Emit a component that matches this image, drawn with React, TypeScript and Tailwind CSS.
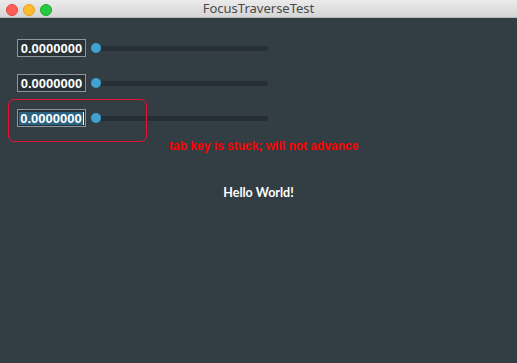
import React from 'react';

const TrafficLights: React.FC = () => (
  <div className="absolute left-[6px] top-[4px] flex gap-[5px]">
    <span className="w-[12px] h-[12px] rounded-full bg-[#fe5f57] border border-[#e2463f]" />
    <span className="w-[12px] h-[12px] rounded-full bg-[#febc2e] border border-[#e1a116]" />
    <span className="w-[12px] h-[12px] rounded-full bg-[#28c840] border border-[#14ae2c]" />
  </div>
);

const SliderRow: React.FC<{ focused?: boolean }> = ({ focused }) => (
  <div className="flex items-center h-[18px]">
    <div className="w-[69px] h-[18px] border border-[#8d979b] bg-[#283236] flex items-center justify-center text-white text-[13px] font-bold leading-none">
      {focused ? (
        <span className="flex items-center">
          <span className="bg-[#2b6482] px-[1px]">0.0000000</span>
          <span className="w-[1px] h-[13px] bg-white" />
        </span>
      ) : (
        <span>0.0000000</span>
      )}
    </div>
    <div className="relative ml-[5px] w-[177px] h-[10px] flex items-center">
      <div className="w-full h-[5px] rounded-full bg-[#263034]" />
      <span className="absolute left-0 top-0 w-[10px] h-[10px] rounded-full bg-[#3fa2d0]" />
    </div>
  </div>
);

export default function App() {
  return (
    <div
      className="w-[517px] h-[363px] flex flex-col bg-[#323e44] overflow-hidden"
      style={{ fontFamily: '"Liberation Sans", Arial, sans-serif' }}
    >
      <div className="relative h-[18px] shrink-0 bg-gradient-to-b from-[#ebebeb] to-[#d5d5d5] border-b border-[#b9b9b9] flex items-center justify-center">
        <TrafficLights />
        <span className="text-[13px] text-[#4a4a4a]" style={{ fontFamily: '"Noto Sans", "Liberation Sans", sans-serif' }}>
          FocusTraverseTest
        </span>
      </div>
      <div className="relative flex-1 flex flex-col">
        <div className="pl-[17px] pt-[21px] flex flex-col gap-[17px]">
          <SliderRow />
          <SliderRow />
          <SliderRow focused />
        </div>
        <div className="absolute left-[8px] top-[81px] w-[139px] h-[43px] rounded-[6px] border-[1.5px] border-[#ec0f36]" />
        <div className="pl-[169px] mt-[12px] text-[#ff0000] text-[12px] font-bold leading-[14px]">
          tab key is stuck; will not advance
        </div>
        <div
          className="mt-[31px] text-center text-white text-[12.5px] font-bold"
          style={{ fontFamily: 'Lato, "Liberation Sans", sans-serif' }}
        >
          Hello World!
        </div>
      </div>
    </div>
  );
}
